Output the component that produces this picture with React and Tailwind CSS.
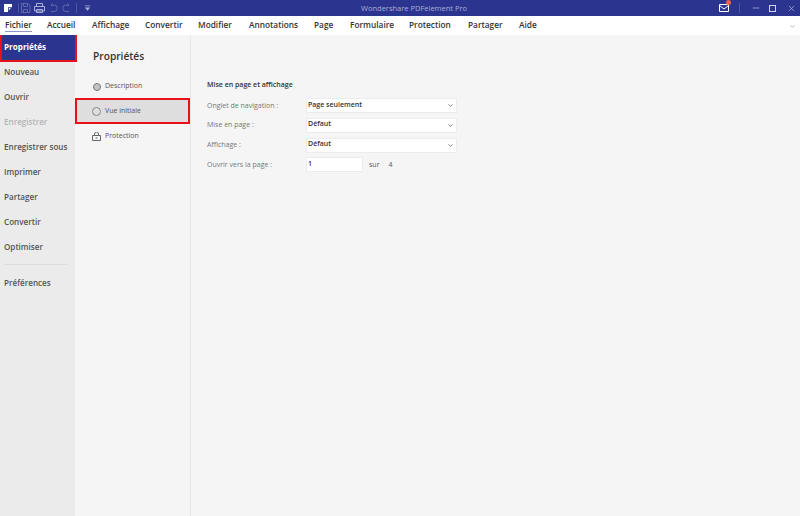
import { ChevronDown, Minus, X } from "lucide-react";

const tabs = [
  ["Fichier", "w-[42px]"],
  ["Accueil", "w-[45px]"],
  ["Affichage", "w-[53px]"],
  ["Convertir", "w-[53px]"],
  ["Modifier", "w-[51px]"],
  ["Annotations", "w-[65px]"],
  ["Page", "w-[36px]"],
  ["Formulaire", "w-[59px]"],
  ["Protection", "w-[59px]"],
  ["Partager", "w-[51px]"],
  ["Aide", "w-[30px]"],
];

const sideItems = [
  ["Nouveau", "text-[#555]"],
  ["Ouvrir", "text-[#555]"],
  ["Enregistrer", "text-[#b5b5b5]"],
  ["Enregistrer sous", "text-[#555]"],
  ["Imprimer", "text-[#555]"],
  ["Partager", "text-[#555]"],
  ["Convertir", "text-[#555]"],
  ["Optimiser", "text-[#555]"],
];

const TitleIcons = () => (
  <div className="flex items-center h-full pl-[4px]">
    <svg width="8" height="8" viewBox="0 0 10 10" fill="#fff">
      <path d="M0 0h10v4H5v6H0z" />
      <path d="M6 5h2.5L6 8z" />
    </svg>
    <div className="w-px h-[10px] bg-[#4a56a6] ml-[6px]" />
    <svg width="57" height="12" viewBox="0 0 57 12" fill="none" stroke="#5f69ad" strokeWidth="1">
      <path d="M2.5 1.5h6.5l2 2v7H2.5z" />
      <path d="M4.5 1.5v3h4v-3M4.5 10.5v-3h4v3" />
      <path d="M17.5 4V1.5h6V4M15.5 4.5h10v4.5h-10zM17.5 7.5h6v3h-6z" stroke="#aab0d6" />
      <path d="M32 3h3a3.2 3.2 0 0 1 0 6.5H32M32 3l1.5-1.5M32 3l1.5 1.5" stroke="#5f69ad" />
      <path d="M50 3h-3a3.2 3.2 0 0 0 0 6.5H50M50 3l-1.5-1.5M50 3l-1.5 1.5" stroke="#5f69ad" />
    </svg>
    <div className="w-px h-[10px] bg-[#4a56a6]" />
    <svg width="7" height="8" viewBox="0 0 8 8" fill="#aab0d6" className="ml-[7px]">
      <path d="M1 1h6v1H1zM1 3.5h6L4 7z" />
    </svg>
  </div>
);

const WindowControls = () => (
  <div className="flex items-center h-full">
    <div className="relative w-[10px] h-[8px] mr-[10px]">
      <svg width="10" height="8" viewBox="0 0 10 8" fill="none" stroke="#fff" strokeWidth="1">
        <path d="M.5.5h9v7h-9zM.5 1.5 5 5l4.5-3.5" />
      </svg>
      <div className="absolute -top-[4px] -right-[2px] w-[5px] h-[5px] rounded-full bg-[#f0603c]" />
    </div>
    <div className="w-px h-[10px] bg-[#4a56a6] mr-[11px]" />
    <Minus size={10} color="#cfd3ea" strokeWidth={1.5} className="mr-[8px]" />
    <div className="w-[7px] h-[7px] border border-[#cfd3ea] mr-[11px]" />
    <X size={9} color="#cfd3ea" strokeWidth={1.5} className="mr-[4px]" />
  </div>
);

const SelectBox = ({ value }) => (
  <div className="flex items-center justify-between w-[151px] h-[15px] bg-white pl-px pr-[2px] pb-[2px] border border-[#ececec]">
    <span className="text-[7px] font-semibold text-[#333]">{value}</span>
    <ChevronDown size={7} color="#555" strokeWidth={2.5} className="mt-[2px]" />
  </div>
);

const FormRow = ({ label, children }) => (
  <div className="flex items-center h-[19.7px]">
    <span className="w-[99px] text-[7px] text-[#777]">{label}</span>
    {children}
  </div>
);

export default function App() {
  return (
    <div className="w-[800px] h-[516px] flex flex-col overflow-hidden bg-[#f5f5f5] font-['Open_Sans',sans-serif]">
      <div className="relative h-[16px] shrink-0 flex items-center justify-between bg-[#2b3590]">
        <TitleIcons />
        <span className="absolute left-[361px] top-[2px] text-[7.5px] leading-[12px] text-[#a9aed6]">
          Wondershare PDFelement Pro
        </span>
        <WindowControls />
      </div>

      <div className="relative h-[19px] shrink-0 flex items-center bg-white pl-[5px]">
        {tabs.map(([name, w], i) => (
          <div key={name} className={`${w} h-full flex items-center`}>
            <span className={`text-[8.3px] font-semibold text-[#333] whitespace-nowrap ${i === 0 ? "border-b border-[#8e96cc] leading-[12px] text-[#2b3590]" : ""}`}>
              {name}
            </span>
          </div>
        ))}
        <ChevronDown size={7} color="#888" className="absolute right-[4px] top-[7px]" />
      </div>

      <div className="flex flex-1 min-h-0">
        <div className="w-[75px] shrink-0 bg-[#ebebeb] flex flex-col">
          <div className="h-[25px] ml-[2px] w-[73px] flex items-center pl-[2px] bg-[#2b3590] outline-2 outline-[#e8101a] text-[8.1px] font-bold text-white">
            Propriétés
          </div>
          {sideItems.map(([name, color]) => (
            <div key={name} className={`h-[25px] flex items-center pl-[4px] text-[8.1px] font-semibold whitespace-nowrap ${color}`}>
              {name}
            </div>
          ))}
          <div className="ml-[4px] w-[63px] mt-[4px] h-px bg-[#dcdcdc]" />
          <div className="h-[36px] flex items-center pl-[4px] text-[8.1px] font-semibold text-[#555]">
            Préférences
          </div>
        </div>

        <div className="w-[116px] shrink-0 border-r border-[#e6e6e6] flex flex-col">
          <div className="h-[40px] pl-[18px] pt-[12px] text-[10.2px] leading-[18px] font-semibold text-[#333] whitespace-nowrap">
            Propriétés
          </div>
          <div className="h-[23px] flex items-center pl-[18px] text-[7px] text-[#555]">
            <div className="w-[8px] h-[8px] rounded-full bg-[#c4c4c4] border border-[#777] mr-[4px]" />
            Description
          </div>
          <div className="h-[26px] flex items-center pl-[15px] bg-[#dedede] border-2 border-[#e8101a] text-[7px] text-[#555]">
            <div className="w-[9px] h-[9px] rounded-full border border-[#888] mr-[4px]" />
            Vue initiale
          </div>
          <div className="h-[25px] flex items-center pl-[17px] text-[7px] text-[#555]">
            <svg width="9" height="9" viewBox="0 0 9 9" fill="none" stroke="#666" className="mr-[4px]">
              <path d="M.5 3.5h8v5h-8zM2.5 3.5V2a2 2 0 0 1 4 0v1.5" />
              <path d="M3.5 6h2" />
            </svg>
            Protection
          </div>
        </div>

        <div className="flex-1 pl-[16px] pt-[43px]">
          <div className="text-[7px] leading-[14px] font-semibold text-[#333]">Mise en page et affichage</div>
          <div className="mt-[4px] flex flex-col">
            <FormRow label="Onglet de navigation :">
              <SelectBox value="Page seulement" />
            </FormRow>
            <FormRow label="Mise en page :">
              <SelectBox value="Défaut" />
            </FormRow>
            <FormRow label="Affichage :">
              <SelectBox value="Défaut" />
            </FormRow>
            <FormRow label="Ouvrir vers la page :">
              <div className="w-[57px] h-[15px] bg-white border border-[#ececec] pl-px pb-[2px] flex items-center text-[7px] font-semibold text-[#333]">
                1
              </div>
              <span className="ml-[6px] text-[7px] text-[#555]">sur</span>
              <span className="ml-[9px] text-[7px] text-[#555]">4</span>
            </FormRow>
          </div>
        </div>
      </div>
    </div>
  );
}
